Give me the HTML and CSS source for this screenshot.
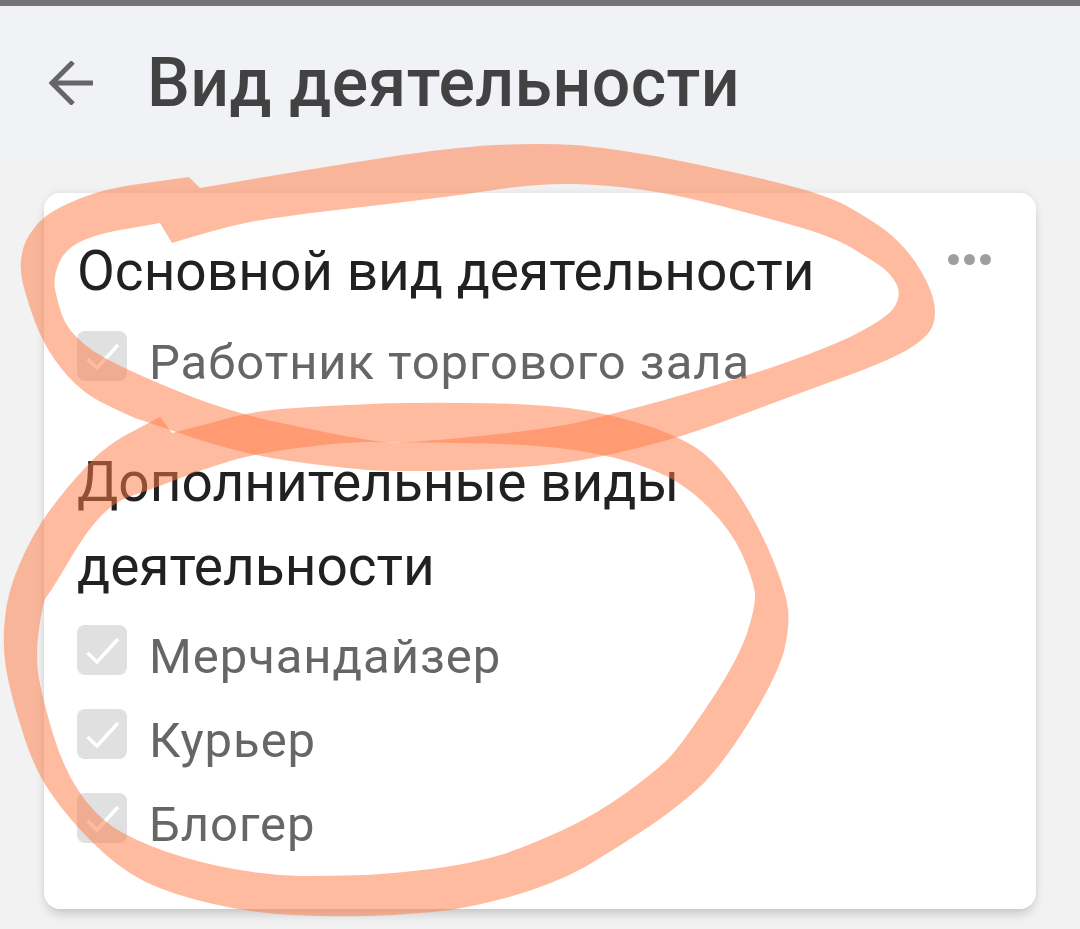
FILE: index.html
```html
<!DOCTYPE html>
<html lang="ru">
<head>
<meta charset="utf-8">
<title>Вид деятельности</title>
<link rel="stylesheet" href="styles.css">
</head>
<body>
<div class="page">
  <header class="header">
    <svg class="back" viewBox="0 0 44 44" width="44" height="44"><path d="M44 22H3M24 1L3 22L24 43"/></svg>
    <h1 class="title">Вид деятельности</h1>
  </header>
  <main class="content">
    <section class="card">
      <div class="title-row">
        <h2 class="section-title">Основной вид деятельности</h2>
        <div class="dots"><i></i><i></i><i></i></div>
      </div>
      <ul class="list">
        <li class="item"><span class="box"><svg viewBox="0 0 50 50" width="50" height="50"><path d="M10.5 28L20 37L41 14"/></svg></span>Работник торгового зала</li>
      </ul>
      <h2 class="section-title extra">Дополнительные виды деятельности</h2>
      <ul class="list tight">
        <li class="item"><span class="box"><svg viewBox="0 0 50 50" width="50" height="50"><path d="M10.5 28L20 37L41 14"/></svg></span>Мерчандайзер</li>
        <li class="item"><span class="box"><svg viewBox="0 0 50 50" width="50" height="50"><path d="M10.5 28L20 37L41 14"/></svg></span>Курьер</li>
        <li class="item"><span class="box"><svg viewBox="0 0 50 50" width="50" height="50"><path d="M10.5 28L20 37L41 14"/></svg></span>Блогер</li>
      </ul>
    </section>
  </main>
  <svg class="marker" viewBox="0 0 1080 929" width="1080" height="929">
    <path fill-rule="evenodd" d="M200 188 L265 177 Q330 166 389 157 Q448 148 494 145 Q540 143 575 145 Q609 148 660 157 Q712 167 767 180 Q822 193 845 205 Q867 217 885 230 Q902 243 916 263 Q929 283 933 298 Q937 313 933 325 Q929 337 907 350 Q884 363 833 381 Q781 400 733 418 Q685 436 649 445 Q612 455 576 461 Q540 467 470 470 Q400 472 367 470 Q333 467 290 461 Q247 455 197 439 Q147 422 135 418 Q123 413 107 405 Q90 397 79 387 Q67 377 55 360 Q43 343 35 322 Q27 300 23 284 Q19 267 22 254 Q24 240 35 227 Q45 213 74 201 Q103 188 146 183 L189 177 Z M172 243 L160 223 L132 228 Q103 232 84 240 Q65 248 59 263 Q53 277 55 289 Q57 300 62 315 Q67 330 84 344 Q100 357 129 370 Q157 383 195 398 Q233 412 267 420 Q300 427 334 434 Q367 440 384 442 Q400 444 470 437 Q540 430 575 423 Q609 415 661 401 Q712 387 764 370 Q815 353 850 337 Q884 320 893 309 Q902 297 897 285 Q891 273 879 265 Q867 257 850 247 Q833 237 799 227 Q764 217 721 206 Q678 195 644 190 Q609 185 575 184 Q540 183 494 190 Q448 197 362 207 Q275 217 250 222 Q224 227 172 243 Z"/>
    <path fill-rule="evenodd" d="M172 433 L211 423 Q243 413 272 410 Q300 407 350 405 Q400 402 465 403 Q530 403 569 408 Q608 413 645 425 Q682 437 702 452 Q721 467 741 498 Q760 528 773 560 Q786 592 788 609 Q790 626 784 651 Q777 676 751 719 Q725 761 704 783 Q682 804 650 826 Q617 848 585 867 Q552 885 509 897 Q465 909 433 912 Q400 915 367 916 Q333 917 292 915 Q250 913 209 903 Q167 893 142 880 Q117 867 92 842 Q67 817 50 792 Q33 767 22 730 Q10 693 6 668 Q2 643 5 618 Q7 593 20 563 Q33 533 50 510 Q67 487 84 469 Q100 450 124 436 L160 417 Z M365 442 Q400 442 465 443 Q530 444 574 450 Q617 456 650 469 Q682 481 706 505 Q730 528 742 554 Q753 579 755 593 Q756 606 747 633 Q738 660 710 702 Q682 744 669 758 Q656 771 626 793 Q595 815 563 830 Q530 845 504 854 Q478 862 439 868 Q400 873 367 875 Q333 876 300 876 Q267 875 234 869 Q200 863 167 852 Q133 840 113 827 Q93 813 78 790 Q63 767 53 734 Q43 700 39 679 Q35 657 39 629 Q43 600 47 596 Q50 593 69 561 Q87 530 102 515 Q117 500 134 495 Q150 490 175 480 Q200 470 224 463 Q247 455 290 449 Q333 443 365 442 Z"/>
  </svg>
</div>
</body>
</html>
```
FILE: styles.css
```css
* { box-sizing: border-box; }
html, body { margin: 0; padding: 0; }
body { width: 1080px; height: 929px; overflow: hidden; background: #f2f2f2; font-family: Roboto, "Noto Sans", sans-serif; }
.page { position: relative; width: 1080px; height: 929px; overflow: hidden; }
.header {
  display: flex; align-items: center; height: 158px;
  padding: 2px 0 0 49px; border-top: 6px solid #747478;
  background: #f1f2f5;
}
.back { flex: none; margin-right: 54px; }
.back path { fill: none; stroke: #666; stroke-width: 5; }
.title { margin: 0; font-size: 68px; line-height: 80px; font-weight: 500; color: #424242; letter-spacing: .4px; }
.content { padding: 35px 44px 0; }
.card {
  height: 716px; padding: 36px 33px 0 33px;
  background: #fff; border-radius: 16px;
  box-shadow: 0 7px 12px -3px rgba(0,0,0,.2), 0 -2px 6px rgba(0,0,0,.05);
}
.title-row { display: flex; justify-content: space-between; align-items: flex-start; }
.section-title { margin: 0; font-size: 55px; line-height: 84px; font-weight: 400; color: #212121; }
.section-title.extra { margin-top: 43px; }
.dots { display: flex; gap: 5px; margin: 25px 12px 0 0; }
.dots i { width: 11px; height: 11px; border-radius: 50%; background: #9e9e9e; }
.list { list-style: none; margin: 0; padding: 0; }
.list.tight { margin-top: -1px; }
.item { display: flex; align-items: center; gap: 22px; height: 84px; padding-top: 14px; font-size: 49px; color: #666; letter-spacing: .95px; }
.box { flex: none; width: 50px; height: 50px; margin-top: -12px; background: #e0e0e0; border-radius: 8px; }
.box svg { display: block; }
.box path { fill: none; stroke: #fff; stroke-width: 3.5; }
.marker { position: absolute; left: 0; top: 0; pointer-events: none; }
.marker path { fill: #ff7b47; fill-opacity: .515; }
```
